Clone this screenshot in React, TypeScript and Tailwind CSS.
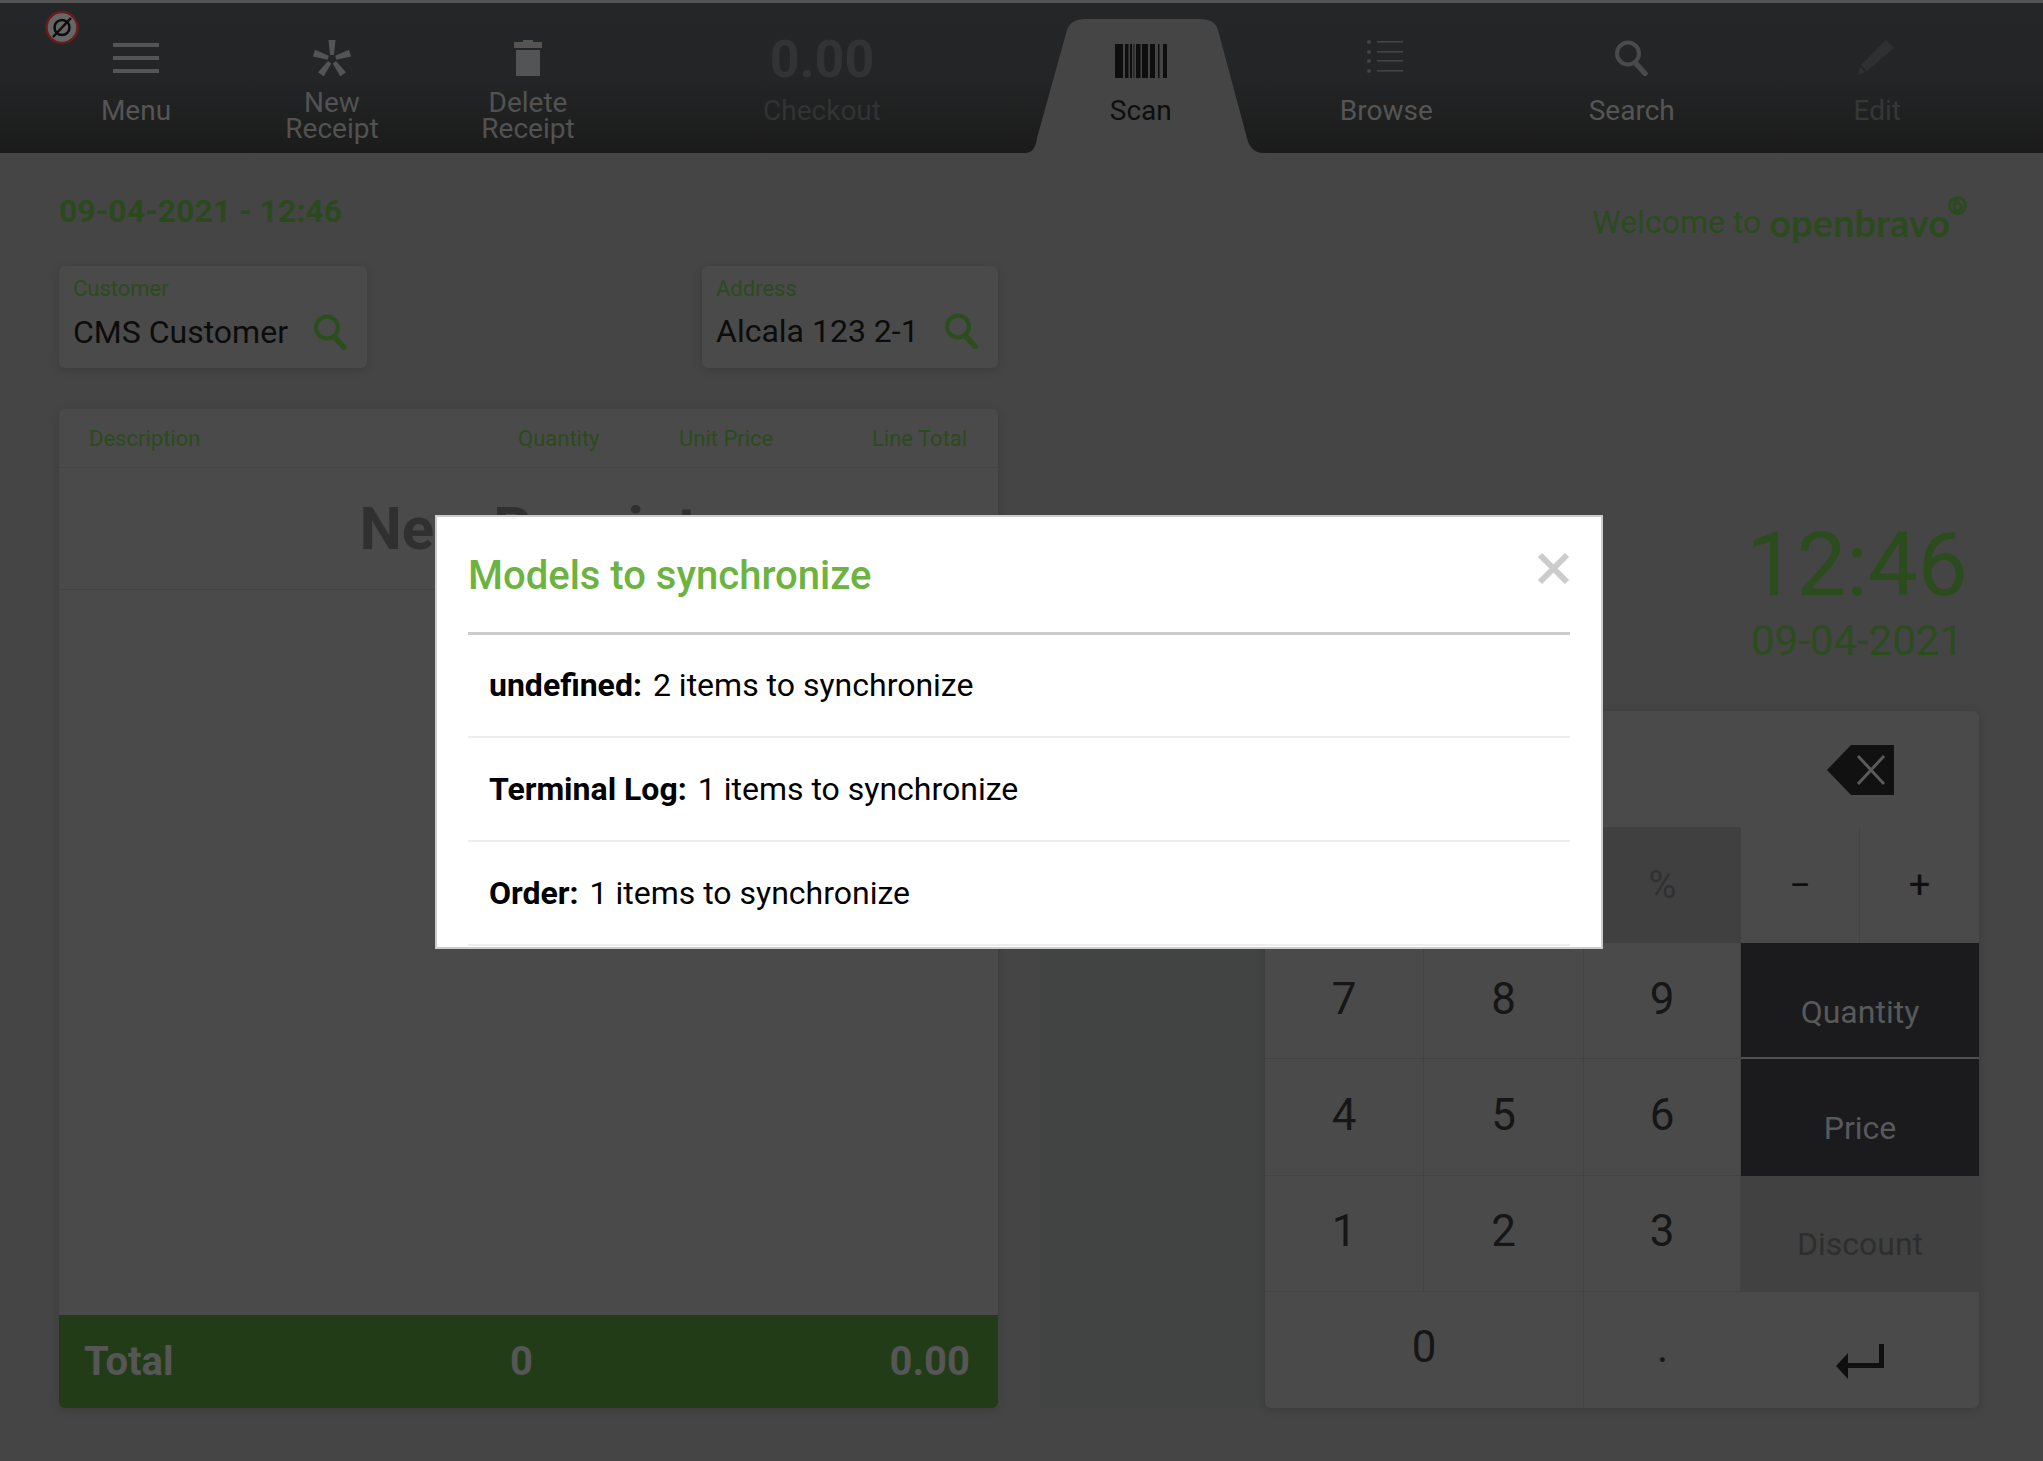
import type { ReactNode } from 'react'

function MenuIcon() {
  return (
    <div className="flex h-[36px] w-[46px] flex-col justify-between py-[3px]">
      <div className="h-[4px] bg-[#555555]" />
      <div className="h-[4px] bg-[#555555]" />
      <div className="h-[4px] bg-[#555555]" />
    </div>
  )
}

function AsteriskIcon() {
  return (
    <svg width="38" height="36" viewBox="0 0 38 36" fill="#545454">
      {[0, 72, 144, 216, 288].map((a) => (
        <polygon key={a} points="15.5,0 22.5,0 21,15 17,15" transform={`rotate(${a} 19 19)`} />
      ))}
    </svg>
  )
}

function TrashIcon() {
  return (
    <svg width="30" height="36" viewBox="0 0 30 36" fill="#545454">
      <path d="M10 0h10v2h9v6H1V2h9z" />
      <rect x="3" y="10" width="24" height="26" />
    </svg>
  )
}

function BarcodeIcon() {
  const bars = [
    [0, 8], [10, 3.5], [15, 2], [18.5, 0.8], [21, 4.5], [27, 6], [35, 5], [43, 1.5], [48, 4],
  ]
  return (
    <svg className="mt-[6px]" width="52" height="34" viewBox="0 0 52 34" fill="#0e0e0e">
      {bars.map(([x, w]) => (
        <rect key={x} x={x} y="0" width={w} height="34" />
      ))}
    </svg>
  )
}

function ListIcon() {
  return (
    <svg width="40" height="36" viewBox="0 0 40 36" fill="#444444">
      {[2, 12, 21, 31].map((y) => (
        <g key={y}>
          <circle cx="3" cy={y} r="2" />
          <rect x="11" y={y - 1} width="26" height="1.6" />
        </g>
      ))}
    </svg>
  )
}

function SearchIcon({ color, size }: { color: string; size: number }) {
  return (
    <svg width={size} height={size} viewBox="0 0 36 36" fill="none" stroke={color}>
      <circle cx="14" cy="13.5" r="11" strokeWidth="4" />
      <path d="M21.5 23L31 33.5" strokeWidth="5.5" strokeLinecap="round" />
    </svg>
  )
}

function PencilIcon() {
  return (
    <svg width="38" height="36" viewBox="0 0 38 36" fill="#303030">
      <path d="M28 0L36 8 9 31 3 25Z" />
      <path d="M2 27L7 32 0 35Z" />
    </svg>
  )
}

function ToolButton({ icon, label, labelClass }: { icon: ReactNode; label: ReactNode; labelClass: string }) {
  return (
    <div className="relative flex h-full flex-col items-center pt-[37px]">
      <div className="flex h-[36px] items-center justify-center">{icon}</div>
      <div className={`text-center text-[28px] leading-[26px] ${labelClass}`}>{label}</div>
    </div>
  )
}

function Toolbar() {
  return (
    <div className="relative mt-[3px] flex h-[150px] bg-gradient-to-b from-[#252627] via-[#242526] to-[#1b1b1b] pl-[38px] pr-[43px]">
      {/* connection badge */}
      <svg className="absolute left-[45px] top-[7px]" width="34" height="35" viewBox="0 0 34 35" fill="none">
        <circle cx="17" cy="17.5" r="15.5" fill="#666666" stroke="#6a1c1c" strokeWidth="2.5" />
        <circle cx="17" cy="17.5" r="7.5" stroke="#0c0c0c" strokeWidth="2.5" />
        <path d="M8 27L26 8" stroke="#0c0c0c" strokeWidth="2.5" />
      </svg>

      <div className="grid w-[980px] grid-cols-5">
        <ToolButton icon={<MenuIcon />} label="Menu" labelClass="mt-[22px] text-[#555555]" />
        <ToolButton icon={<AsteriskIcon />} label={<>New<br />Receipt</>} labelClass="mt-[14px] text-[#525252]" />
        <ToolButton icon={<TrashIcon />} label={<>Delete<br />Receipt</>} labelClass="mt-[14px] text-[#525252]" />
        <div className="col-span-2">
          <ToolButton
            icon={<span className="pt-[3px] text-[52px] font-bold leading-[36px] text-[#323334]">0.00</span>}
            label="Checkout"
            labelClass="mt-[22px] text-[#323334]"
          />
        </div>
      </div>

      <div className="grid flex-1 grid-cols-4">
        <div className="relative">
          <svg className="absolute left-[7px] top-[16px]" width="238" height="134" viewBox="0 0 238 134" fill="#454545">
            <path d="M0 134C7 134 11 128 12 119L42 11Q46 0 60 0L175 0Q190 0 193 11L222 119C224 128 230 134 238 134Z" />
          </svg>
          <ToolButton icon={<BarcodeIcon />} label="Scan" labelClass="mt-[22px] text-[#0e0e0e]" />
        </div>
        <ToolButton icon={<ListIcon />} label="Browse" labelClass="mt-[22px] text-[#555555]" />
        <ToolButton icon={<SearchIcon color="#4a4a4a" size={36} />} label="Search" labelClass="mt-[22px] text-[#555555]" />
        <ToolButton icon={<PencilIcon />} label="Edit" labelClass="mt-[22px] text-[#363636]" />
      </div>
    </div>
  )
}

function FieldBox({ label, value, width, valueClass }: { label: string; value: string; width: string; valueClass: string }) {
  return (
    <div className={`flex h-[102px] flex-col rounded-[6px] bg-[#4a4a4a] pl-[14px] pr-[18px] pt-[10px] shadow-[0_2px_8px_rgba(0,0,0,0.15)] ${width}`}>
      <div className="text-[22px] leading-[26px] text-[#2b4b1e]">{label}</div>
      <div className={`flex items-center justify-between ${valueClass}`}>
        <span className="text-[32px] leading-[40px] text-[#0c0c0c]">{value}</span>
        <SearchIcon color="#2b4f1c" size={36} />
      </div>
    </div>
  )
}

function ReceiptTable() {
  return (
    <div className="mt-[41px] flex flex-1 flex-col overflow-hidden rounded-[6px] bg-[#4a4a4a] shadow-[0_2px_8px_rgba(0,0,0,0.15)]">
      <div className="flex h-[59px] items-center border-b border-[#434343] text-[22px] text-[#2b4b1e]">
        <span className="ml-[30px] w-[429px]">Description</span>
        <span className="w-[161px]">Quantity</span>
        <span className="w-[193px]">Unit Price</span>
        <span>Line Total</span>
      </div>
      <div className="flex h-[122px] items-center justify-center border-b border-[#434343] text-[60px] font-bold text-[#303030]">
        New Receipt
      </div>
      <div className="flex-1" />
      <div className="flex h-[93px] items-center bg-[#233c18] pl-[25px] pr-[28px] text-[40px] font-bold text-[#565656]">
        <span className="w-[426px]">Total</span>
        <span className="flex-1">0</span>
        <span>0.00</span>
      </div>
    </div>
  )
}

function BackspaceIcon() {
  return (
    <svg width="67" height="50" viewBox="0 0 67 50">
      <path d="M24 0H67V50H24L0 25Z" fill="#111111" />
      <path d="M31 11L57 39M57 11L31 39" stroke="#5a5a5a" strokeWidth="3" fill="none" />
    </svg>
  )
}

function EnterIcon() {
  return (
    <svg width="48" height="36" viewBox="0 0 48 36" fill="#0f0f0f">
      <path d="M43 0h5v24H12v11L0 22 12 9v10h31z" />
    </svg>
  )
}

function Key({ children, className }: { children: ReactNode; className: string }) {
  return <div className={`flex items-center justify-center ${className}`}>{children}</div>
}

function Keypad() {
  const digits = ['7', '8', '9', 'Quantity', '4', '5', '6', 'Price', '1', '2', '3', 'Discount']
  return (
    <div className="grid h-[697px] w-[714px] grid-cols-[159px_160px_157px_238px] grid-rows-6 overflow-hidden rounded-[6px] bg-[#4a4a4a] shadow-[0_2px_8px_rgba(0,0,0,0.15)]">
      <div className="col-span-3" />
      <Key className="pt-[2px]"><BackspaceIcon /></Key>

      <div className="col-span-2" />
      <Key className="bg-[#404040] text-[38px] text-[#303030]">%</Key>
      <div className="grid grid-cols-2 text-[38px] text-[#0f0f0f]">
        <Key className="border-r border-[#434343]">−</Key>
        <Key>+</Key>
      </div>

      {digits.map((d) => {
        if (d === 'Quantity' || d === 'Price') {
          return (
            <Key key={d} className={`bg-[#1b1b1d] text-[32px] text-[#58595a] ${d === 'Quantity' ? 'border-b-2 border-[#505050] pt-[24px]' : 'pt-[21px]'}`}>
              {d}
            </Key>
          )
        }
        if (d === 'Discount') {
          return <Key key={d} className="bg-[#414141] pt-[21px] text-[32px] text-[#2e2e2e]">{d}</Key>
        }
        return (
          <Key key={d} className="border-b border-r border-[#434343] pb-[4px] text-[44px] text-[#161616]">
            {d}
          </Key>
        )
      })}

      <Key className="col-span-2 border-r border-[#434343] pb-[6px] text-[44px] text-[#161616]">0</Key>
      <Key className="pb-[6px] text-[44px] text-[#161616]">.</Key>
      <Key className="pt-[24px]"><EnterIcon /></Key>
    </div>
  )
}

function SyncDialog() {
  const rows = [
    { name: 'undefined:', text: '2 items to synchronize' },
    { name: 'Terminal Log:', text: '1 items to synchronize' },
    { name: 'Order:', text: '1 items to synchronize' },
  ]
  return (
    <div className="absolute left-[435px] top-[515px] w-[1168px] border-[2px] border-[#cccccc] bg-white px-[31px] pb-px">
      <div className="relative flex h-[118px] items-center border-b-[3px] border-[#cccccc]">
        <h2 className="pt-[2px] text-[40px] font-medium text-[#6cb33f]">Models to synchronize</h2>
        <svg className="absolute right-0 top-[35px]" width="33" height="33" viewBox="0 0 33 33">
          <path d="M3 3L30 30M30 3L3 30" stroke="#cccccc" strokeWidth="6" />
        </svg>
      </div>
      <div className="-mt-px">
        {rows.map((row) => (
          <div key={row.name} className="flex h-[104px] items-center gap-[11px] border-b-[2px] border-[#eeeeee] pl-[21px] text-[32px] text-black">
            <b className="font-bold">{row.name}</b>
            <span>{row.text}</span>
          </div>
        ))}
      </div>
    </div>
  )
}

export default function App() {
  return (
    <div className="relative h-[1461px] overflow-hidden bg-[#454545] font-['Roboto',sans-serif]">
      <div className="absolute inset-x-0 top-0 h-[3px] bg-[#555555]" />
      <Toolbar />

      <div className="flex h-[1308px] pb-[53px] pl-[59px] pr-[64px]">
        {/* left column */}
        <div className="flex w-[939px] flex-col">
          <div className="mt-[38px] text-[32px] font-bold leading-[40px] text-[#2a4a1d]">09-04-2021 - 12:46</div>
          <div className="mt-[35px] flex justify-between">
            <FieldBox label="Customer" value="CMS Customer" width="w-[308px]" valueClass="pt-[10px]" />
            <FieldBox label="Address" value="Alcala 123 2-1" width="w-[296px]" valueClass="pt-[9px]" />
          </div>
          <ReceiptTable />
        </div>

        {/* right column */}
        <div className="ml-[42px] flex flex-1 flex-col">
          <div className="relative mt-[44px] flex h-[50px] items-center justify-end pr-[29px] text-[#2b4b1e]">
            <span className="text-[32px]">Welcome to</span>
            <span className="ml-[8px] font-['Lato',sans-serif] text-[38px] font-bold leading-none">openbravo</span>
            <svg className="absolute right-[12px] top-[-1px]" width="19" height="19" viewBox="0 0 19 19" fill="none" stroke="#2b4b1e" strokeWidth="3">
              <circle cx="9.5" cy="9.5" r="8" />
              <circle cx="9.5" cy="11" r="3.5" />
              <path d="M6 10C6 7 7 5 10 4" />
            </svg>
          </div>
          <div className="mr-[3px] mt-[268px] flex w-[238px] flex-col items-center self-end text-[#2b4d1e]">
            <div className="text-[89px] leading-[100px]">12:46</div>
            <div className="mt-[1px] text-[42px] leading-[50px]">09-04-2021</div>
          </div>
          <div className="mt-auto flex">
            <div className="mt-auto h-[696px] w-[225px] bg-[#424444]" />
            <Keypad />
          </div>
        </div>
      </div>

      <SyncDialog />
    </div>
  )
}
